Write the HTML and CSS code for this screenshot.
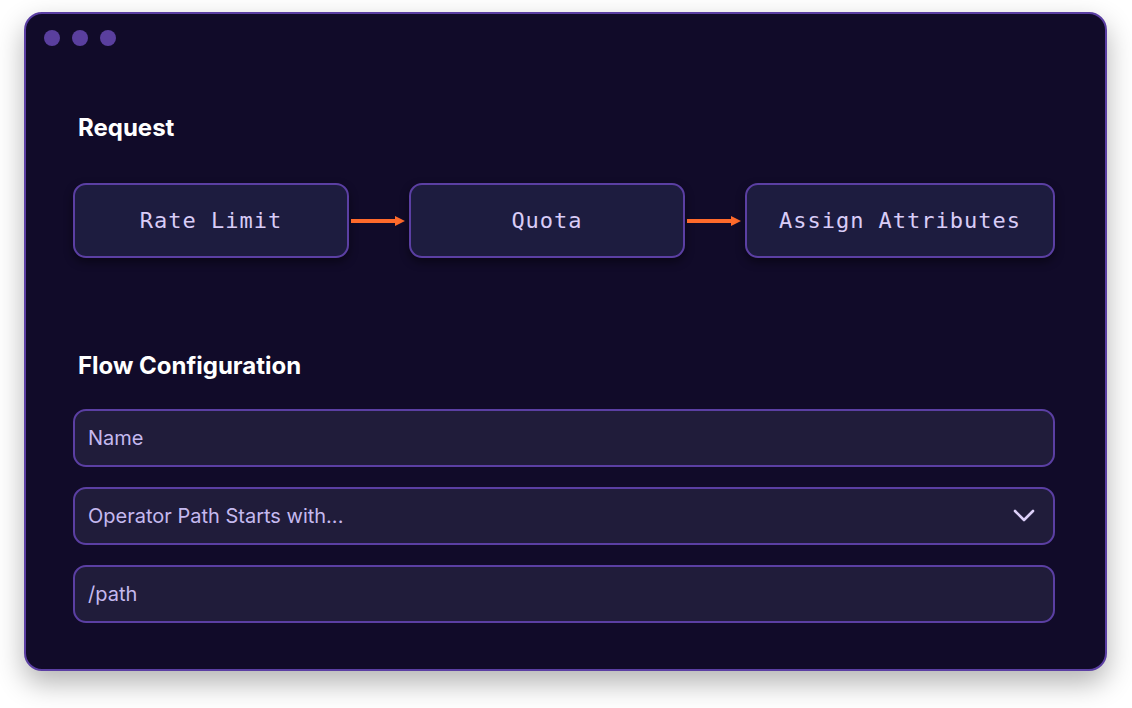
FILE: index.html
```html
<!DOCTYPE html>
<html>
<head>
<meta charset="utf-8">
<link rel="stylesheet" href="styles.css">
</head>
<body>
<div class="window">
  <div class="dots"><span class="dot"></span><span class="dot"></span><span class="dot"></span></div>
  <h2 class="heading heading-request">Request</h2>
  <div class="flow">
    <div class="step step-narrow">Rate Limit</div>
    <div class="arrow"><svg width="60" height="12" viewBox="0 0 60 12"><rect x="2" y="4" width="46" height="4" fill="#ff6a2b"/><polygon points="46,1 56,6 46,11" fill="#ff6a2b"/></svg></div>
    <div class="step step-narrow">Quota</div>
    <div class="arrow"><svg width="60" height="12" viewBox="0 0 60 12"><rect x="2" y="4" width="46" height="4" fill="#ff6a2b"/><polygon points="46,1 56,6 46,11" fill="#ff6a2b"/></svg></div>
    <div class="step step-wide">Assign Attributes</div>
  </div>
  <h2 class="heading heading-config">Flow Configuration</h2>
  <div class="fields">
    <div class="field">Name</div>
    <div class="field field-select">
      <span>Operator Path Starts with...</span>
      <svg class="chevron" width="22" height="14" viewBox="0 0 22 14"><polyline points="2,2 11,11 20,2" fill="none" stroke="#dccff8" stroke-width="2.6" stroke-linecap="round" stroke-linejoin="round"/></svg>
    </div>
    <div class="field">/path</div>
  </div>
</div>
</body>
</html>
```

FILE: styles.css
```css
html {
  min-height: 100%;
  background: #ffffff;
}
body {
  margin: 0;
  min-height: 708px;
  box-sizing: border-box;
  padding: 12px 0 0 24px;
  font-family: Inter, "Noto Sans", sans-serif;
}
.window {
  width: 1083px;
  height: 659px;
  box-sizing: border-box;
  background: #110b29;
  border: 2px solid #5b3fa3;
  border-radius: 18px;
  box-shadow: 0 12px 28px rgba(0, 0, 0, 0.3);
  padding: 16px 50px 0 47px;
}
.dots {
  display: flex;
  gap: 12px;
  margin-left: -29px;
  height: 16px;
}
.dot {
  width: 16px;
  height: 16px;
  border-radius: 50%;
  background: #5a3f9e;
}
.heading {
  margin: 0;
  color: #ffffff;
  font-size: 24px;
  font-weight: 700;
  line-height: 28px;
  padding-left: 5px;
}
.heading-request {
  margin-top: 68px;
}
.flow {
  display: flex;
  align-items: center;
  margin-top: 41px;
}
.step {
  height: 75px;
  box-sizing: border-box;
  border: 2px solid #5b3fa3;
  border-radius: 13px;
  background: #1d1c3f;
  box-shadow: 0 4px 10px rgba(0, 0, 0, 0.45);
  display: flex;
  align-items: center;
  justify-content: center;
  color: #d9ccf7;
  font-family: "DejaVu Sans Mono", "Liberation Mono", monospace;
  font-size: 22px;
  letter-spacing: 1px;
}
.step-narrow {
  width: 276px;
}
.step-wide {
  width: 310px;
}
.arrow {
  width: 60px;
  height: 12px;
  display: flex;
}
.heading-config {
  margin-top: 94px;
}
.fields {
  display: flex;
  flex-direction: column;
  gap: 20px;
  margin-top: 29px;
}
.field {
  height: 58px;
  box-sizing: border-box;
  border: 2px solid #5b3fa3;
  border-radius: 13px;
  background: #201c3a;
  color: #c5b9ef;
  font-size: 20px;
  display: flex;
  align-items: center;
  justify-content: space-between;
  padding: 0 18px 0 13px;
}
.chevron {
  display: block;
}
```
